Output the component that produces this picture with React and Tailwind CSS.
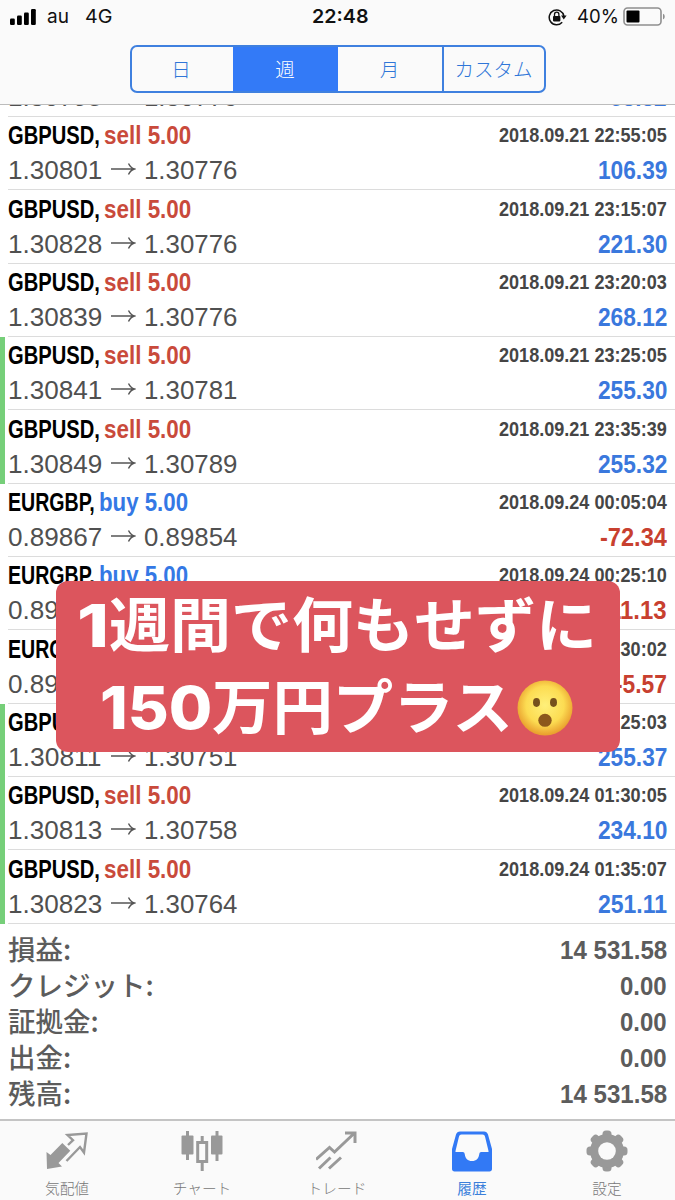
import React, { useLayoutEffect, useRef, useState } from "react";

const deals = [
  { symbol: "GBPUSD", type: "sell", open: "1.30795", close: "1.30776", date: "2018.09.21 22:50:05", profit: "53.32" },
  { symbol: "GBPUSD", type: "sell", open: "1.30801", close: "1.30776", date: "2018.09.21 22:55:05", profit: "106.39" },
  { symbol: "GBPUSD", type: "sell", open: "1.30828", close: "1.30776", date: "2018.09.21 23:15:07", profit: "221.30" },
  { symbol: "GBPUSD", type: "sell", open: "1.30839", close: "1.30776", date: "2018.09.21 23:20:03", profit: "268.12" },
  { symbol: "GBPUSD", type: "sell", open: "1.30841", close: "1.30781", date: "2018.09.21 23:25:05", profit: "255.30", tp: true },
  { symbol: "GBPUSD", type: "sell", open: "1.30849", close: "1.30789", date: "2018.09.21 23:35:39", profit: "255.32", tp: true },
  { symbol: "EURGBP", type: "buy", open: "0.89867", close: "0.89854", date: "2018.09.24 00:05:04", profit: "-72.34" },
  { symbol: "EURGBP", type: "buy", open: "0.89862", close: "0.89854", date: "2018.09.24 00:25:10", profit: "-11.13" },
  { symbol: "EURGBP", type: "buy", open: "0.89855", close: "0.89854", date: "2018.09.24 00:30:02", profit: "-5.57" },
  { symbol: "GBPUSD", type: "sell", open: "1.30811", close: "1.30751", date: "2018.09.24 01:25:03", profit: "255.37", tp: true },
  { symbol: "GBPUSD", type: "sell", open: "1.30813", close: "1.30758", date: "2018.09.24 01:30:05", profit: "234.10", tp: true },
  { symbol: "GBPUSD", type: "sell", open: "1.30823", close: "1.30764", date: "2018.09.24 01:35:07", profit: "251.11", tp: true },
];

const summary = [
  { label: "損益:", width: 63, value: "14 531.58" },
  { label: "クレジット:", width: 146, value: "0.00" },
  { label: "証拠金:", width: 91, value: "0.00" },
  { label: "出金:", width: 63, value: "0.00" },
  { label: "残高:", width: 63, value: "14 531.58" },
];

const profitWidth = (profit) => {
  if (profit[0] === "-") {
    return profit.length === 6 ? 67 : 52;
  }
  return profit.length === 6 ? 69 : 57;
};

// Squeezes a line of text into a given width
const Fit = ({ width, className = "", children }) => {
  const ref = useRef(null);
  const [scale, setScale] = useState(1);

  useLayoutEffect(() => {
    setScale(width / ref.current.offsetWidth);
  }, [width, children]);

  return (
    <div className={`shrink-0 whitespace-nowrap ${className}`} style={{ width }}>
      <span
        ref={ref}
        className="inline-block origin-left whitespace-pre align-top"
        style={{ transform: `scaleX(${scale})` }}
      >
        {children}
      </span>
    </div>
  );
};

const StatusBar = () => (
  <div className="flex h-[34px] items-center font-['Inter'] text-[19px] leading-[34px] text-[#111]">
    <svg className="ml-[10px]" width="26" height="17" viewBox="0 0 26 17" fill="#000">
      <rect x="0" y="9.5" width="4.8" height="6.5" rx="1.2" />
      <rect x="7" y="6.5" width="4.8" height="9.5" rx="1.2" />
      <rect x="14" y="3.5" width="4.8" height="12.5" rx="1.2" />
      <rect x="21" y="0" width="4.8" height="16" rx="1.2" />
    </svg>
    <Fit width={22} className="ml-[11px]">au</Fit>
    <Fit width={27} className="ml-[16px]">4G</Fit>
    <Fit width={57} className="ml-[200px] font-semibold">22:48</Fit>
    <svg className="ml-[179px]" width="20" height="18" viewBox="0 0 20 18" fill="none">
      <path d="M14.2 14.2A7.4 7.4 0 1 1 15.9 8" stroke="#111" strokeWidth="1.5" />
      <path d="M13 7.6h5.6l-2.8 4z" fill="#111" />
      <rect x="5" y="8" width="7.4" height="5.4" rx="0.8" fill="#111" />
      <path d="M6.5 8V6.4a2.2 2.2 0 0 1 4.4 0V8" stroke="#111" strokeWidth="1.3" />
    </svg>
    <Fit width={42} className="ml-[9px]">40%</Fit>
    <svg className="ml-[4px]" width="44" height="20" viewBox="0 0 44 20" fill="none">
      <rect x="1" y="1" width="37" height="17" rx="3.5" stroke="#8f8f8f" strokeWidth="1.6" />
      <rect x="3.5" y="3.5" width="13" height="12" rx="1" fill="#000" />
      <path d="M40 6.7c2.3.6 2.3 5 0 5.6z" fill="#8f8f8f" />
    </svg>
  </div>
);

const Segments = () => (
  <div className="mx-auto mt-[11px] grid h-[48px] w-[416px] grid-cols-[101px_105px_104px_1fr] overflow-hidden rounded-[7px] border-2 border-[#3f80df] text-center font-['Noto_Sans_CJK_JP'] text-[19.5px] font-light leading-[43px] text-[#2f76d8]">
    <div className="pr-[2px]">日</div>
    <div className="bg-[#337af7] text-white">週</div>
    <div>月</div>
    <div className="border-l-2 border-[#3f80df]">カスタム</div>
  </div>
);

const Arrow = () => (
  <svg className="mx-[8px] mt-[9px] shrink-0" width="26" height="16" viewBox="0 0 26 16" fill="none" stroke="#555" strokeWidth="1.4">
    <path d="M1 8h23.5M18.500 2.500c1.400 3 3.200 4.700 6 5.500c-2.800.8-4.600 2.500-6 5.500" />
  </svg>
);

const Deal = ({ deal }) => {
  const sell = deal.type === "sell";
  return (
    <div
      className={`flex h-[73.35px] shrink-0 border-l-[5px] pl-[3px] ${
        deal.tp ? "border-[#76cf79]" : "border-transparent"
      }`}
    >
      <div className="flex-1 border-b border-[#dcdcdc] pr-[8px] pt-[3.4px]">
        <div className="flex h-[32px] justify-between font-bold">
          <div className="flex text-[25px] leading-[31px]">
            <Fit width={sell ? 92 : 87} className="text-black">
              {deal.symbol},
            </Fit>
            <Fit
              width={sell ? 87 : 89}
              className={sell ? "ml-[4px] text-[#c94a3b]" : "ml-[4px] text-[#3478e5]"}
            >
              {deal.type} 5.00
            </Fit>
          </div>
          <Fit width={168} className="text-[20px] leading-[30px] text-[#454545]">
            {deal.date}
          </Fit>
        </div>
        <div className="flex h-[36px] justify-between text-[25px] leading-[36px]">
          <div className="flex text-[#505050]">
            <Fit width={94}>{deal.open}</Fit>
            <Arrow />
            <Fit width={93}>{deal.close}</Fit>
          </div>
          <Fit
            width={profitWidth(deal.profit)}
            className={`font-bold ${deal.profit[0] === "-" ? "text-[#c8402f]" : "text-[#3a78dd]"}`}
          >
            {deal.profit}
          </Fit>
        </div>
      </div>
    </div>
  );
};

const Banner = () => (
  <div className="absolute left-[56px] top-[581px] h-[171px] w-[564px] rounded-[12px] bg-[#dc555d] font-['Inter','Noto_Sans_CJK_JP',sans-serif] text-[59px] font-bold leading-[82px] text-white">
    <div className="flex pl-[21px] pt-[4px]">
      <Fit width={32} className="font-extrabold">1</Fit>
      <Fit width={488}>週間で何もせずに</Fit>
    </div>
    <div className="flex pl-[44px]">
      <Fit width={112} className="font-extrabold">150</Fit>
      <Fit width={301}>万円プラス</Fit>
      <svg className="ml-[4px] mt-[13px]" width="56" height="56" viewBox="0 0 56 56">
        <defs>
          <radialGradient id="face" cx="0.5" cy="0.45" r="0.53">
            <stop offset="0" stopColor="#fff07a" />
            <stop offset="0.65" stopColor="#fcdc52" />
            <stop offset="1" stopColor="#eaa22f" />
          </radialGradient>
        </defs>
        <circle cx="28" cy="28" r="27.5" fill="url(#face)" />
        <ellipse cx="19.5" cy="22.5" rx="3.5" ry="4.4" fill="#76501c" />
        <ellipse cx="36.5" cy="22.5" rx="3.5" ry="4.4" fill="#76501c" />
        <ellipse cx="28" cy="40.3" rx="6.7" ry="6.5" fill="#8b571c" />
      </svg>
    </div>
  </div>
);

const QuotesIcon = () => (
  <svg width="42" height="42" viewBox="0 0 42 42" fill="none">
    <path d="M.5 22l4 3L16.300 13l8 7.800L12.500 33l3.500 3.500L1 39z" fill="#999" />
    <path d="M20.500 31L34 17l4 5.500L40.500 3.500L21.500 5l5.500 5.200L22 15" stroke="#999" strokeWidth="2.400" />
  </svg>
);

const ChartIcon = () => (
  <svg width="42" height="42" viewBox="0 0 42 42" fill="#999">
    <rect x="5" y="1" width="3" height="29" />
    <rect x="0.5" y="5.5" width="12" height="19" rx="1" />
    <rect x="34.5" y="1" width="3" height="30" />
    <rect x="30" y="5.5" width="11.5" height="19" rx="1" />
    <rect x="19.7" y="6" width="3" height="6" />
    <rect x="19.7" y="32" width="3" height="9" />
    <rect x="16.7" y="12.5" width="9" height="19" fill="none" stroke="#999" strokeWidth="3" />
  </svg>
);

const TradeIcon = () => (
  <svg width="42" height="42" viewBox="0 0 42 42" fill="none" stroke="#999" strokeWidth="3">
    <path d="M0 29.500L13.500 17.500L18.500 22L38 3.500M29 3h10v10" />
    <path d="M3 38.500L14.500 27.500M13 38.500L25 27.500" />
  </svg>
);

const HistoryIcon = () => (
  <svg width="42" height="42" viewBox="0 0 42 42">
    <path
      fillRule="evenodd"
      fill="#3279f5"
      d="M9 1.500h24c2 0 3.300 1 4 3L41 19v20c0 1.500-1 2.500-2.500 2.500h-35C2 41.500 1 40.500 1 39V19L5 4.500c.7-2 2-3 4-3zM10.500 4.500c-1.500 0-2 .7-2.500 2L4.500 21v1h7.200c1.300 0 1.800.7 2 2c.6 4.500 3 7 7.300 7s6.700-2.500 7.300-7c.2-1.300.7-2 2-2h7.200v-1L34 6.500c-.5-1.300-1-2-2.500-2z"
    />
  </svg>
);

const SettingsIcon = () => (
  <svg width="42" height="42" viewBox="0 0 42 42">
    <g fill="#999">
      {[0, 45, 90, 135].map((deg) => (
        <rect key={deg} x="16.5" y="0.5" width="9" height="41" rx="3.5" transform={`rotate(${deg} 21 21)`} />
      ))}
      <circle cx="21" cy="21" r="17" />
    </g>
    <circle cx="21" cy="21" r="8.8" fill="#fafafa" />
  </svg>
);

const tabs = [
  { name: "気配値", Icon: QuotesIcon },
  { name: "チャート", Icon: ChartIcon },
  { name: "トレード", Icon: TradeIcon },
  { name: "履歴", Icon: HistoryIcon, active: true },
  { name: "設定", Icon: SettingsIcon },
];

const App = () => {
  return (
    <div className="relative flex h-[1200px] w-[675px] flex-col overflow-hidden bg-white font-['Liberation_Sans','Noto_Sans_CJK_JP',sans-serif]">
      <header className="h-[105px] shrink-0 border-b border-[#bcbcbc] bg-[#fafafa]">
        <StatusBar />
        <Segments />
      </header>

      {/* Closed deals, scrolled to the end */}
      <div className="flex h-[818.6px] shrink-0 flex-col justify-end overflow-hidden">
        {deals.map((deal) => (
          <Deal key={deal.date} deal={deal} />
        ))}
      </div>

      <div className="flex flex-1 flex-col pl-[8px] pr-[8px] pt-[7px]">
        {summary.map((item) => (
          <div key={item.label} className="flex h-[36px] justify-between text-[#5c5c5c]">
            <Fit width={item.width} className="font-['Noto_Sans_CJK_JP'] text-[27.5px] font-medium leading-[35px]">
              {item.label}
            </Fit>
            <Fit width={item.value.length > 4 ? 107 : 47} className="text-[25px] font-bold leading-[38px]">
              {item.value}
            </Fit>
          </div>
        ))}
      </div>

      <nav className="grid h-[81px] shrink-0 grid-cols-5 border-t-2 border-[#c4c4c4] bg-[#fafafa]">
        {tabs.map(({ name, Icon, active }) => (
          <div key={name} className="flex flex-col items-center pr-[1px] pt-[9px]">
            <Icon />
            <span
              className={`mt-[6px] font-['Noto_Sans_CJK_JP'] text-[14.7px] leading-[20px] ${
                active ? "font-normal text-[#3b7fda]" : "font-light text-[#777]"
              }`}
            >
              {name}
            </span>
          </div>
        ))}
      </nav>

      <Banner />
    </div>
  );
};

export default App;
